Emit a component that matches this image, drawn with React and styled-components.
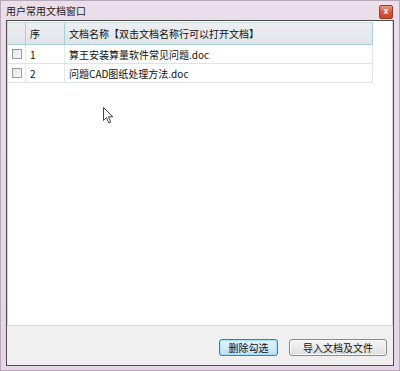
import React from "react"
import styled, { createGlobalStyle } from "styled-components"

const GlobalStyle = createGlobalStyle`
  html, body {
    margin: 0;
    padding: 0;
    background: #e6dae6;
  }
  * {
    box-sizing: border-box;
  }
`

const FONT = `"Noto Sans CJK SC", "Liberation Sans", sans-serif`

const Window = styled.div`
  width: 400px;
  height: 371px;
  display: flex;
  flex-direction: column;
  background: linear-gradient(180deg, #eadfea 0%, #e4d6e4 100%);
  border: 1px solid #b8a8b8;
  font-family: ${FONT};
  font-size: 10px;
  color: #111;
  position: relative;
`

const TitleBar = styled.div`
  height: 19px;
  display: flex;
  align-items: center;
  justify-content: space-between;
  padding: 0 6px 0 5px;
`

const Title = styled.span`
  font-size: 10px;
  color: #1a1a1a;
  letter-spacing: 0;
`

const CloseButton = styled.div`
  width: 14px;
  height: 14px;
  margin-top: 3px;
  border: 1px solid #9c3b2c;
  border-radius: 2px;
  background: linear-gradient(180deg, #e99a86 0%, #d9573c 50%, #c8432a 100%);
  color: #fff;
  font-size: 9px;
  font-weight: bold;
  line-height: 11px;
  text-align: center;
  font-family: "Liberation Sans", sans-serif;
`

const Client = styled.div`
  flex: 1;
  margin: 0 5px 4px 5px;
  border: 1px solid #4d4d4d;
  display: flex;
  flex-direction: column;
  background: #f0f0f0;
`

const ListArea = styled.div`
  flex: 1;
  background: #fff;
  border-left: 1px solid #d6d6d6;
  border-right: 1px solid #d6d6d6;
  padding-top: 1px;
`

const Grid = styled.div`
  width: 365px;
  display: grid;
  grid-template-columns: 18px 39px 308px;
`

const HeadCell = styled.div`
  height: 23px;
  display: flex;
  align-items: center;
  padding-left: ${(p) => p.$pad || 4}px;
  background: linear-gradient(180deg, #eceef1 0%, #e1e5ea 100%);
  border-right: 1px solid #a6d0d6;
  border-bottom: 1px solid #a6d0d6;
  border-top: 1px solid #c8dde0;
  color: #111;
`

const Cell = styled.div`
  height: 19px;
  display: flex;
  align-items: center;
  justify-content: ${(p) => (p.$center ? "center" : "flex-start")};
  padding-left: ${(p) => (p.$center ? 0 : 4)}px;
  border-right: 1px solid #dfe7e8;
  border-bottom: 1px solid #dfe3e4;
  color: #111;
`

const Check = styled.span`
  width: 10px;
  height: 10px;
  border: 1px solid #9a9a9a;
  background: linear-gradient(135deg, #e4e4e4 0%, #fafafa 100%);
  margin-left: 1px;
`

const BottomPanel = styled.div`
  height: 40px;
  border-top: 1px solid #dadada;
  display: flex;
  align-items: flex-start;
  justify-content: flex-end;
  gap: 11px;
  padding: 13px 6px 0 0;
`

const Button = styled.div`
  height: 17px;
  width: ${(p) => p.$w}px;
  display: flex;
  align-items: center;
  justify-content: center;
  border: 1px solid ${(p) => (p.$focused ? "#3c7fb1" : "#8a8a8a")};
  border-radius: 3px;
  background: ${(p) =>
    p.$focused
      ? "linear-gradient(180deg, #e5f3fc 0%, #d3ebfa 50%, #b9def5 100%)"
      : "linear-gradient(180deg, #f4f4f4 0%, #ebebeb 50%, #dcdcdc 100%)"};
  box-shadow: inset 0 0 0 1px ${(p) => (p.$focused ? "#a8e1fb" : "#fbfbfb")};
  font-size: 10px;
  color: #111;
`

const Pointer = styled.svg`
  position: absolute;
  left: 102px;
  top: 106px;
`

const rows = [
  { id: 1, name: "算王安装算量软件常见问题.doc" },
  { id: 2, name: "问题CAD图纸处理方法.doc" },
]

const App = () => {
  return (
    <>
      <GlobalStyle />
      <Window>
        <TitleBar>
          <Title>用户常用文档窗口</Title>
          <CloseButton>x</CloseButton>
        </TitleBar>
        <Client>
          <ListArea>
            <Grid>
              <HeadCell />
              <HeadCell>序</HeadCell>
              <HeadCell>文档名称【双击文档名称行可以打开文档】</HeadCell>
              {rows.map((r) => (
                <React.Fragment key={r.id}>
                  <Cell $center>
                    <Check />
                  </Cell>
                  <Cell>{r.id}</Cell>
                  <Cell>{r.name}</Cell>
                </React.Fragment>
              ))}
            </Grid>
          </ListArea>
          <BottomPanel>
            <Button $focused $w={59}>删除勾选</Button>
            <Button $w={98}>导入文档及文件</Button>
          </BottomPanel>
        </Client>
        <Pointer width="12" height="18" viewBox="0 0 12 18">
          <path
            d="M0.5 0.5 L0.5 13.5 L3.5 10.5 L5.8 16 L7.8 15.2 L5.6 9.8 L9.8 9.8 Z"
            fill="#fff"
            stroke="#444"
            strokeWidth="1"
            strokeLinejoin="round"
          />
        </Pointer>
      </Window>
    </>
  )
}

export default App
